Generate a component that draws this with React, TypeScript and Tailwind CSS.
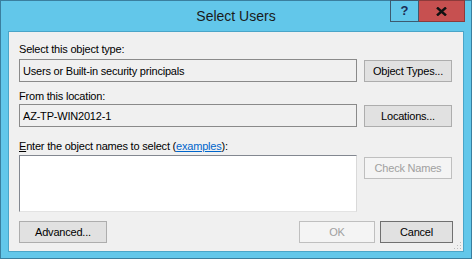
import React from 'react';

const font = { fontFamily: '"Liberation Sans", Arial, sans-serif' };

function Btn({ label, disabled, isDefault, w }: { label: string; disabled?: boolean; isDefault?: boolean; w: string }) {
  const cls = disabled
    ? 'bg-[#f4f4f4] border-[#bfbfbf] text-[#a0a0a0]'
    : isDefault
      ? 'bg-[#e1e1e1] border-[#707070] text-black'
      : 'bg-[#e1e1e1] border-[#adadad] text-black';
  return (
    <button className={`${w} h-[22px] border text-[11px] tracking-[-0.2px] leading-[20px] flex items-center justify-center ${cls}`}>
      {label}
    </button>
  );
}

function ReadBox({ value }: { value: string }) {
  return (
    <div className="w-[338px] h-[23px] border border-[#8a8a8a] bg-[#f0f0f0] px-[3px] text-[11px] tracking-[-0.2px] leading-[20px] text-black flex items-center">
      {value}
    </div>
  );
}

export default function App() {
  return (
    <div style={font} className="w-[472px] h-[259px] bg-[#62c7ea] border border-[#3a7f9f] flex flex-col">
      <div className="relative h-[30px] shrink-0 flex items-center justify-center">
        <span className="text-[14px] text-[#1a1a1a] mt-[1px]">Select Users</span>
        <div className="absolute top-[-1px] right-[6px] flex">
          <div className="w-[29px] h-[22px] border border-[#3c5a70] bg-[#62c7ea] flex items-center justify-center text-[13px] font-bold text-[#1b2b55]">?</div>
          <div className="w-[46px] h-[22px] border border-l-0 border-[#8c3a3a] bg-[#c75050] flex items-center justify-center">
            <svg width="11" height="9" viewBox="0 0 11 9">
              <path d="M1 0.5 L10 8.5 M10 0.5 L1 8.5" stroke="#111" strokeWidth="2.4" />
            </svg>
          </div>
        </div>
      </div>
      <div className="ml-[7px] w-[456px] h-[221px] bg-[#f0f0f0] border border-[#4aa5c8] relative flex flex-col pl-[10px] pr-[10px] text-[11px] tracking-[-0.2px]">
        <div className="mt-[10px] h-[15px] leading-[15px] text-black">Select this object type:</div>
        <div className="mt-[2px] flex items-center gap-[7px]">
          <ReadBox value="Users or Built-in security principals" />
          <Btn label="Object Types..." w="w-[88px]" />
        </div>
        <div className="mt-[7px] h-[15px] leading-[15px] text-black">From this location:</div>
        <div className="mt-[0px] flex items-center gap-[7px]">
          <ReadBox value="AZ-TP-WIN2012-1" />
          <Btn label="Locations..." w="w-[88px]" />
        </div>
        <div className="mt-[12px] h-[15px] leading-[15px] text-black">
          <span className="underline">E</span>nter the object names to select (
          <span className="text-[#0066cc] underline">examples</span>):
        </div>
        <div className="mt-[1px] flex items-start gap-[7px]">
          <div className="w-[338px] h-[57px] bg-white border border-t-[#828790] border-l-[#828790] border-r-[#d9d9d9] border-b-[#e3e3e3]" />
          <div className="mt-[2px]">
            <Btn label="Check Names" disabled w="w-[88px]" />
          </div>
        </div>
        <div className="mt-[9px] flex items-center">
          <Btn label="Advanced..." w="w-[88px]" />
          <div className="flex-1" />
          <div className="flex gap-[5px]">
            <Btn label="OK" disabled w="w-[76px]" />
            <Btn label="Cancel" isDefault w="w-[73px]" />
          </div>
        </div>
        <svg className="absolute right-[1px] bottom-[1px]" width="8" height="8" viewBox="0 0 8 8">
          <rect x="6" y="0" width="1" height="1" fill="#bcbcbc" />
          <rect x="6" y="3" width="1" height="1" fill="#bcbcbc" />
          <rect x="3" y="3" width="1" height="1" fill="#bcbcbc" />
          <rect x="6" y="6" width="1" height="1" fill="#bcbcbc" />
          <rect x="3" y="6" width="1" height="1" fill="#bcbcbc" />
          <rect x="0" y="6" width="1" height="1" fill="#bcbcbc" />
        </svg>
      </div>
    </div>
  );
}
